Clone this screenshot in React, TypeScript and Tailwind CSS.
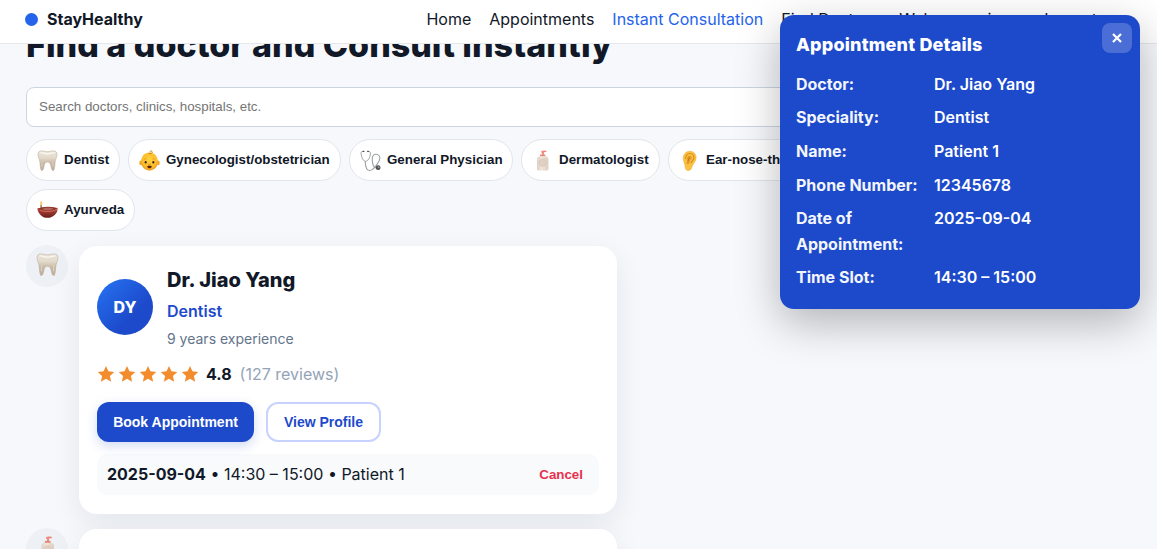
import React from "react";

type P = { size: number };

function Tooth({ size }: P) {
  return (
    <svg width={size} height={size} viewBox="0 0 22 22" className="block shrink-0">
      <defs>
        <linearGradient id="toothFill" x1="0" y1="0" x2="0" y2="1">
          <stop offset="0" stopColor="#ece6da" />
          <stop offset=".35" stopColor="#e2dacb" />
          <stop offset=".62" stopColor="#c9b9a5" />
          <stop offset="1" stopColor="#bfae9b" />
        </linearGradient>
      </defs>
      <path d="M1 5C.8 2.500 2.200.8 5 .9c2.300.1 3.700.9 6 .9s3.700-.8 6-.9c2.800-.1 4.200 1.600 4 4.100-.2 2.900-1.700 4.500-2 7.500-.3 3.200-.4 6.900-1.500 9-1.700.6-2.400-1.800-2.900-4.300-.4-2.200-1-4.600-3.600-4.600s-3.200 2.400-3.600 4.600c-.5 2.500-1.200 4.900-2.900 4.300C3.400 19.400 3.300 15.700 3 12.500 2.700 9.500 1.200 7.900 1 5z" fill="url(#toothFill)" stroke="#b5a796" strokeWidth=".5" />
      <path d="M4 2.800c3 .2 4.800 1.200 7 1.200s4-1 7-1.200" stroke="#faf7ef" strokeWidth="1.300" fill="none" strokeLinecap="round" />
      <path d="M5.200 11.500v6M16.800 11.500v6" stroke="#ded2c3" strokeWidth="1" fill="none" />
    </svg>
  );
}

function Baby({ size }: P) {
  return (
    <svg width={size} height={size} viewBox="0 0 22 22" className="block shrink-0">
      <defs>
        <radialGradient id="babyFill" cx=".5" cy=".4" r=".6">
          <stop offset="0" stopColor="#ffd13b" />
          <stop offset=".7" stopColor="#fdbd2c" />
          <stop offset="1" stopColor="#ee9a20" />
        </radialGradient>
      </defs>
      <ellipse cx="2" cy="13.500" rx="1.700" ry="2.400" fill="#f2a427" />
      <ellipse cx="20" cy="13.500" rx="1.700" ry="2.400" fill="#f2a427" />
      <path d="M11 2.500c5.200 0 8.700 4 8.700 9.600 0 5.900-3.600 9.400-8.700 9.400s-8.700-3.500-8.700-9.400C2.300 6.500 5.800 2.500 11 2.500z" fill="url(#babyFill)" />
      <path d="M10.500 3.800c2.500.4 4-.7 3.200-2.200-.6-1-2.300-.7-2.300.4" stroke="#c78013" strokeWidth="1" fill="none" strokeLinecap="round" />
      <path d="M5.500 10c.5-.7 1.300-1 2.300-.8M16.500 10c-.5-.7-1.300-1-2.300-.8" stroke="#c98214" strokeWidth=".6" fill="none" />
      <ellipse cx="7" cy="12.900" rx="1.050" ry="1.350" fill="#33251f" />
      <ellipse cx="15" cy="12.900" rx="1.050" ry="1.350" fill="#33251f" />
      <path d="M8.600 17c1.500-.6 3.300-.6 4.800 0-.3 1.400-1.100 2.200-2.400 2.200s-2.100-.8-2.400-2.200z" fill="#54200d" />
      <path d="M10 14.900h2" stroke="#d68b15" strokeWidth=".8" strokeLinecap="round" />
    </svg>
  );
}

function Stethoscope({ size }: P) {
  return (
    <svg width={size} height={size} viewBox="0 0 22 22" className="block shrink-0" fill="none" strokeLinecap="round">
      <path d="M3 1.500C.8 1.600.9 3 1.200 4.500c.7 3.300 1.500 6.500 4.300 7.500 3.300-.4 4.900-4.300 5.400-8 .2-1.500-.3-2.600-1.900-2.500" stroke="#999c9f" strokeWidth="1" />
      <path d="M5.500 12c.1 4.500 1 9.300 4.500 9.400 3.800.1 5.500-3.400 7.800-6.400 2.800-3.600 4.300-6.400 2.200-9-1.800-2.200-5.500-1.900-6.700.7-1.100 2.400-.3 4.500 0 7 .3 2.600.8 4.800 3.700 5" stroke="#999c9f" strokeWidth="1.100" />
      <path d="M3.200 1.500h.9M8 1.500h.9" stroke="#55585b" strokeWidth="1.300" />
      <circle cx="19" cy="18.500" r="2.500" fill="#4a4d51" />
      <circle cx="19.500" cy="18" r="1" fill="#9b9ea2" />
    </svg>
  );
}

function Lotion({ size }: P) {
  return (
    <svg width={size} height={size} viewBox="0 0 22 22" className="block shrink-0">
      <defs>
        <linearGradient id="lotionFill" x1="0" x2="1">
          <stop offset="0" stopColor="#dfd0c5" />
          <stop offset=".4" stopColor="#f1e4d9" />
          <stop offset="1" stopColor="#dccdc1" />
        </linearGradient>
      </defs>
      <path d="M9.700 1.200c1-.8 3.200-.7 5.100-.5.600.1.600 1.300 0 1.400l-2.300.2v2.600h-2V2.500l-1 .5z" fill="#ef8c7b" />
      <path d="M8.500 4.700h5.400v2H8.500z" fill="#e58374" />
      <path d="M8.200 6.500h6c2.200.4 3 1.700 3 3.500v9.600c0 1.300-.7 2-2 2h-8c-1.300 0-2-.7-2-2V10c0-1.800.8-3.100 3-3.500z" fill="url(#lotionFill)" />
      <ellipse cx="11.200" cy="13.300" rx="3.600" ry="3.900" fill="#e0d0c5" stroke="#cfbdb1" strokeWidth=".5" />
    </svg>
  );
}

function Ear({ size }: P) {
  return (
    <svg width={size} height={size} viewBox="0 0 22 22" className="block shrink-0">
      <path d="M4.500 9.200C4.300 4.600 7.200 1.300 11.300 1.300c4 0 6.800 3 6.600 7-.2 3.700-2.600 5.100-3.700 7.700-.9 2.300-1.300 5.400-4.300 5.500-2.600.1-3.500-1.900-3.600-4.800-.1-2.700-1.700-4.300-1.800-7.500z" fill="#fbc23f" stroke="#e8a12c" strokeWidth=".5" />
      <path d="M7 9.500c-.3-3.500 1.700-5.900 4.500-5.800 3 .1 4.600 2.300 4 5-.5 2.300-2.300 3-2.900 5.100" stroke="#d88b22" strokeWidth="1.200" fill="none" />
      <path d="M8.500 9.300c0-2.300 1.300-3.500 2.900-3.300 2 .3 2.500 2.300 1.400 3.800-.7 1-1.600 1.100-1.500 2.300.1 1.300-.7 2.700-2 2.800-1.500 0-1.800-1.400-1.200-2.400.5-.9.400-1.900.4-3.200z" fill="#e39a2c" />
      <path d="M11 7.500c-1 1-.8 2.400-1.400 4" stroke="#b96c18" strokeWidth=".8" fill="none" />
    </svg>
  );
}

function Lamp({ size }: P) {
  return (
    <svg width={size} height={size} viewBox="0 0 22 22" className="block shrink-0">
      <defs>
        <linearGradient id="lampFill" x1="0" y1="0" x2="0" y2="1">
          <stop offset="0" stopColor="#c24c40" />
          <stop offset="1" stopColor="#671d1a" />
        </linearGradient>
      </defs>
      <path d="M.4 8.800C4 8 17 7 21.500 8.500c.6 4.600-4 9.900-10.400 10.200C5.500 18.800.700 13.800.4 8.800z" fill="url(#lampFill)" />
      <ellipse cx="11.500" cy="9.500" rx="9.600" ry="2.400" fill="#8d352c" />
      <path d="M3 10.500c4 2 12 2.300 18-.7" stroke="#dd796b" strokeWidth=".9" fill="none" />
      <path d="M5 9.500c3-1.500 9-1.800 12-.8-1 2.500-8 3-12 .8z" fill="#b4655a" />
      <path d="M4.300 9V5" stroke="#67493e" strokeWidth="1.200" />
      <path d="M4.300.5c2 2.500 1.600 5 0 5.100-1.600-.2-1.600-2.400 0-5.100z" fill="#f8ce78" />
    </svg>
  );
}

const specialities: [string, React.ComponentType<P>, string][] = [
  ["Dentist", Tooth, "w-[94px]"],
  ["Gynecologist/obstetrician", Baby, "w-[213px]"],
  ["General Physician", Stethoscope, "w-[164px]"],
  ["Dermatologist", Lotion, "w-[139px]"],
  ["Ear-nose-throat (ent)", Ear, "w-[190px]"],
  ["Ayurveda", Lamp, "w-[109px]"],
];

const details: [string, string][] = [
  ["Doctor:", "Dr. Jiao Yang"],
  ["Speciality:", "Dentist"],
  ["Name:", "Patient 1"],
  ["Phone Number:", "12345678"],
  ["Date of Appointment:", "2025-09-04"],
  ["Time Slot:", "14:30 – 15:00"],
];

function Header() {
  return (
    <header className="relative z-10 flex h-11 items-center justify-between border-b border-[#e5e7eb] bg-white pr-[60px] pb-[5px] pl-[25px]">
      <div className="flex items-center gap-[9px] font-bold">
        <span className="size-[13px] rounded-full bg-[#2563eb]" />
        StayHealthy
      </div>
      <nav className="flex gap-[18px] whitespace-nowrap">
        <a>Home</a>
        <a>Appointments</a>
        <a className="text-[#2563eb]">Instant Consultation</a>
        <a className="w-[100px]">Find Doctors</a>
        <a className="w-[127px]">Welcome, yisan</a>
        <a>Logout</a>
      </nav>
    </header>
  );
}

function DoctorCard() {
  return (
    <article className="mt-px h-[268px] w-[538px] rounded-[18px] bg-white p-[18px] shadow-[0_10px_30px_rgba(15,23,42,0.08)]">
      <div className="flex items-center gap-[14px]">
        <div className="flex size-14 items-center justify-center rounded-full bg-linear-135 from-[#2774f3] to-[#1d4acb] to-65% font-extrabold text-white">DY</div>
        <div className="flex flex-col">
          <h2 className="text-[20px] leading-8 font-extrabold">Dr. Jiao Yang</h2>
          <p className="mt-[2px] leading-[26px] font-semibold text-[#1d4acb]">Dentist</p>
          <p className="mt-1 text-[14px] leading-[22px] text-[#64748b]">9 years experience</p>
        </div>
      </div>
      <div className="mt-[11px] flex h-[26px] items-center">
        <div className="flex gap-[3px]">
          {[1, 2, 3, 4, 5].map((n) => (
            <svg key={n} width="18" height="18" viewBox="0 0 24 24" className="fill-[#f28c2c]">
              <path d="M12 1.300l3.250 7.070 7.750.93-5.730 5.280 1.530 7.650L12 18.400l-6.800 3.830 1.530-7.650L1 9.300l7.750-.93z" />
            </svg>
          ))}
        </div>
        <b className="ml-[7px] font-bold">4.8</b>
        <span className="ml-2 text-[#94a3b8]">(127 reviews)</span>
      </div>
      <div className="mt-[15px] flex gap-3 font-['Liberation_Sans',sans-serif] text-[14px] font-bold">
        <button className="h-10 w-[157px] rounded-xl bg-[#1d4acb] text-white shadow-[0_4px_12px_rgba(29,74,203,0.2)]">Book Appointment</button>
        <button className="h-10 w-[115px] rounded-xl border-2 border-[#c7d2fe] text-[#1d4acb]">View Profile</button>
      </div>
      <div className="mt-3 flex h-[41px] items-center justify-between rounded-[10px] bg-[#f8fafc] pr-4 pl-[10px]">
        <span className="-mt-px"><b className="font-bold">2025-09-04</b> • 14:30 – 15:00 • Patient 1</span>
        <button className="font-['Liberation_Sans',sans-serif] text-[13.333px] font-bold text-[#e8304c]">Cancel</button>
      </div>
    </article>
  );
}

function AppointmentPanel() {
  return (
    <aside className="absolute top-[15px] left-[780px] z-20 h-[294px] w-[360px] rounded-[14px] bg-[#1d4acb] px-4 pt-[15px] text-white shadow-[0_14px_44px_rgba(0,0,0,0.28)]">
      <h3 className="text-[18px] leading-[29px] font-extrabold tracking-[0.19px]">Appointment Details</h3>
      <button className="absolute top-2 right-2 flex size-[30px] items-center justify-center rounded-lg bg-white/20">
        <svg width="10" height="10" viewBox="0 0 10 10" stroke="white" strokeWidth="2.200"><path d="M1 1l8 8M9 1L1 9" /></svg>
      </button>
      <dl className="mt-[12.75px] grid grid-cols-[130px_1fr] gap-2 leading-[25.6px] font-semibold">
        {details.map(([label, value]) => (
          <React.Fragment key={label}>
            <dt className="font-bold opacity-95">{label}</dt>
            <dd>{value}</dd>
          </React.Fragment>
        ))}
      </dl>
    </aside>
  );
}

export default function App() {
  return (
    <div className="relative h-[549px] w-[1157px] overflow-hidden bg-[#f6f8fc] font-[Inter,sans-serif] text-[16px] text-[#111827]">
      <Header />
      <main className="px-[26px]">
        <h1 className="-mt-[25px] h-[68px] text-[34px] leading-[52px] font-extrabold whitespace-nowrap">Find a doctor and Consult instantly</h1>
        <input
          className="block h-10 w-[1105px] rounded-lg border border-[#cbd5e1] bg-white px-3 pb-0.5 font-['Liberation_Sans',sans-serif] text-[13.333px] placeholder:text-[#757575]"
          placeholder="Search doctors, clinics, hospitals, etc."
        />
        <div className="mt-3 flex w-[900px] flex-wrap gap-2">
          {specialities.map(([name, Icon, width]) => (
            <button key={name} className={`flex h-[42px] items-center gap-[6px] rounded-full border border-[#e2e5ec] bg-white pl-[10px] font-['Liberation_Sans',sans-serif] text-[13.333px] font-bold whitespace-nowrap ${width}`}>
              <Icon size={21} />
              {name}
            </button>
          ))}
        </div>
        <section className="mt-[14px] flex flex-col gap-[14px]">
          <div className="flex gap-[11px]">
            <div className="flex size-[42px] items-center justify-center rounded-full bg-[#edf1f5] pb-1"><Tooth size={23} /></div>
            <DoctorCard />
          </div>
          <div className="flex gap-[11px]">
            <div className="flex size-[42px] items-center justify-center rounded-full bg-[#edf1f5] pb-1"><Lotion size={23} /></div>
            <DoctorCard />
          </div>
        </section>
      </main>
      <AppointmentPanel />
    </div>
  );
}
